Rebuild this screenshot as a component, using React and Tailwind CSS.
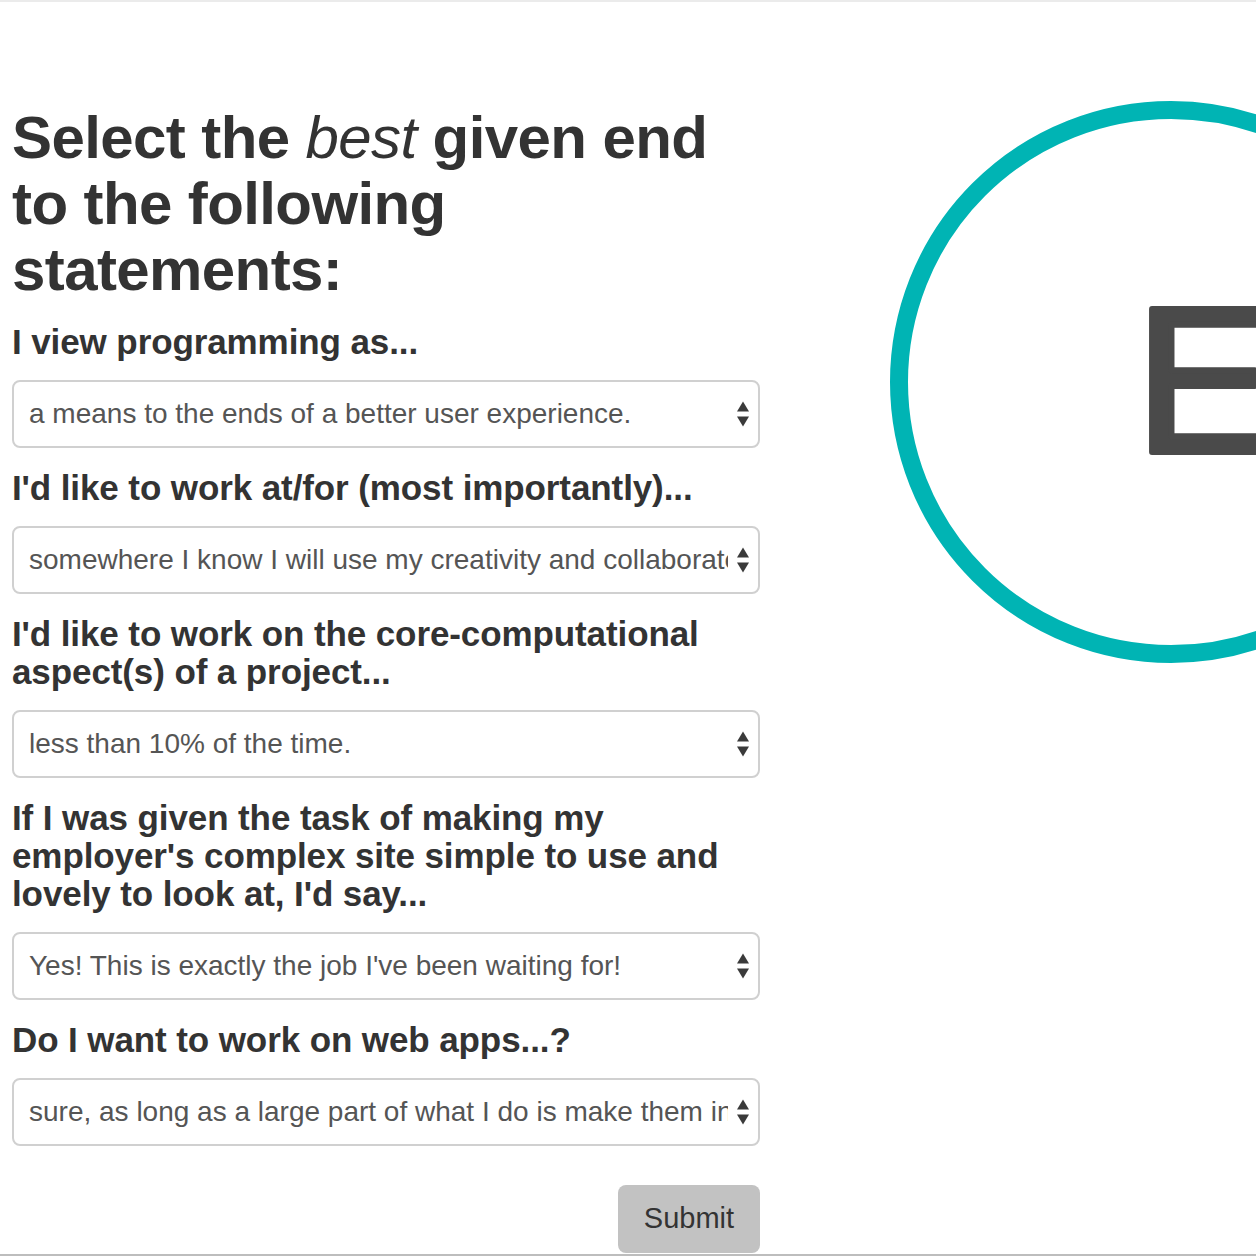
import { useState } from "react"

const questions = [
    {
        label: "I view programming as...",
        options: [
            "a means to the ends of a better user experience.",
            "an end in itself.",
        ],
    },
    {
        label: "I'd like to work at/for (most importantly)...",
        options: [
            "somewhere I know I will use my creativity and collaborate with designers.",
            "somewhere with hard technical problems.",
        ],
    },
    {
        label: "I'd like to work on the core-computational aspect(s) of a project...",
        options: ["less than 10% of the time.", "most of the time."],
    },
    {
        label: "If I was given the task of making my employer's complex site simple to use and lovely to look at, I'd say...",
        options: ["Yes! This is exactly the job I've been waiting for!", "No thanks."],
    },
    {
        label: "Do I want to work on web apps...?",
        options: [
            "sure, as long as a large part of what I do is make them intuitive and beautiful.",
            "only the backend.",
        ],
    },
]

function Question({ label, options }) {
    const [value, setValue] = useState(options[0])

    return (
        <div className="flex flex-col">
            <h3 className="mb-[19px] text-[35px] font-bold leading-[38px] tracking-[-0.1px] text-[#333]">
                {label}
            </h3>
            <div className="relative mb-[21px]">
                <select
                    className="h-[68px] w-full appearance-none rounded-[8px] border-2 border-[#d0d0d0] bg-white pl-[15px] pr-[30px] text-[28px] text-[#555] outline-none"
                    value={value}
                    onChange={(e) => setValue(e.target.value)}
                >
                    {options.map((o) => (
                        <option key={o} value={o}>{o}</option>
                    ))}
                </select>
                <span className="pointer-events-none absolute right-[11px] top-1/2 flex -translate-y-1/2 flex-col items-center gap-[5px]">
                    <span className="h-0 w-0 border-x-[6px] border-b-[10px] border-x-transparent border-b-[#3a3a3a]" />
                    <span className="h-0 w-0 border-x-[6px] border-t-[10px] border-x-transparent border-t-[#3a3a3a]" />
                </span>
            </div>
        </div>
    )
}

function Logo() {
    return (
        <svg width="600" height="580" viewBox="0 0 600 580" className="shrink-0">
            <circle cx="289" cy="289" r="272" fill="none" stroke="#00b4b4" strokeWidth="18" />
            <text
                x="253"
                y="359"
                fontFamily="Liberation Sans, Arial, sans-serif"
                fontSize="208"
                fill="#4a4a4a"
                stroke="#4a4a4a"
                strokeWidth="6"
                strokeLinejoin="round"
            >
                E
            </text>
        </svg>
    )
}

export default function App() {
    return (
        <div
            className="flex h-[1256px] w-full overflow-hidden border-t-2 border-b-2 border-t-[#ebebeb] border-b-[#bdbdbd] bg-white"
            style={{ fontFamily: '"Liberation Sans", Arial, sans-serif' }}
        >
            <form className="flex w-[772px] shrink-0 flex-col pl-[12px] pr-[12px] pt-[103px]" onSubmit={(e) => e.preventDefault()}>
                <h1 className="mb-[20px] text-[60px] font-bold leading-[66px] tracking-[-0.6px] text-[#333]">
                    Select the <em className="font-normal">best</em> given end to the following statements:
                </h1>
                {questions.map((q) => (
                    <Question key={q.label} label={q.label} options={q.options} />
                ))}
                <div className="mt-[18px] flex justify-end">
                    <button
                        type="submit"
                        className="h-[68px] w-[142px] rounded-[8px] bg-[#c2c2c2] text-[29px] text-[#333]"
                    >
                        Submit
                    </button>
                </div>
            </form>
            <div className="flex flex-1 overflow-visible pl-[110px] pt-[91px]">
                <Logo />
            </div>
        </div>
    )
}
